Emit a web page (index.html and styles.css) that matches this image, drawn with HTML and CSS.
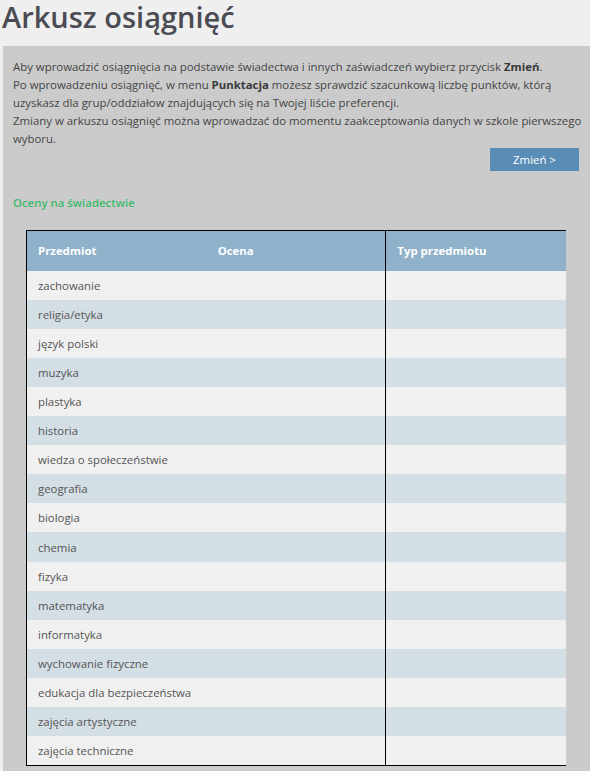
FILE: index.html
```html
<!DOCTYPE html>
<html lang="pl">
<head>
<meta charset="utf-8">
<title>Arkusz osiągnięć</title>
<link rel="stylesheet" href="styles.css">
</head>
<body>
<h1 class="title">Arkusz osiągnięć</h1>
<div class="panel">
  <p class="intro">Aby wprowadzić osiągnięcia na podstawie świadectwa i innych zaświadczeń wybierz przycisk <b>Zmień</b>.<br>
  Po wprowadzeniu osiągnięć, w menu <b>Punktacja</b> możesz sprawdzić szacunkową liczbę punktów, którą uzyskasz dla grup/oddziałow znajdujących się na Twojej liście preferencji.<br>
  Zmiany w arkuszu osiągnięć można wprowadzać do momentu zaakceptowania danych w szkole pierwszego wyboru.</p>
  <div class="actions"><button class="btn">Zmień &gt;</button></div>
  <h2 class="section">Oceny na świadectwie</h2>
  <table class="grades">
    <thead>
      <tr><th class="c1">Przedmiot</th><th class="c2">Ocena</th><th class="c3">Typ przedmiotu</th></tr>
    </thead>
    <tbody>
      <tr><td>zachowanie</td><td></td><td class="c3"></td></tr>
      <tr><td>religia/etyka</td><td></td><td class="c3"></td></tr>
      <tr><td>język polski</td><td></td><td class="c3"></td></tr>
      <tr><td>muzyka</td><td></td><td class="c3"></td></tr>
      <tr><td>plastyka</td><td></td><td class="c3"></td></tr>
      <tr><td>historia</td><td></td><td class="c3"></td></tr>
      <tr><td>wiedza o społeczeństwie</td><td></td><td class="c3"></td></tr>
      <tr><td>geografia</td><td></td><td class="c3"></td></tr>
      <tr><td>biologia</td><td></td><td class="c3"></td></tr>
      <tr><td>chemia</td><td></td><td class="c3"></td></tr>
      <tr><td>fizyka</td><td></td><td class="c3"></td></tr>
      <tr><td>matematyka</td><td></td><td class="c3"></td></tr>
      <tr><td>informatyka</td><td></td><td class="c3"></td></tr>
      <tr><td>wychowanie fizyczne</td><td></td><td class="c3"></td></tr>
      <tr><td>edukacja dla bezpieczeństwa</td><td></td><td class="c3"></td></tr>
      <tr><td>zajęcia artystyczne</td><td></td><td class="c3"></td></tr>
      <tr><td>zajęcia techniczne</td><td></td><td class="c3"></td></tr>
    </tbody>
  </table>
</div>
</body>
</html>
```
FILE: styles.css
```css
* { box-sizing: border-box; }
html, body { margin: 0; padding: 0; }
body {
  background: #efefef;
  font-family: "Open Sans", "Liberation Sans", sans-serif;
  color: #444;
  height: 771px;
  overflow: hidden;
}
.title {
  margin: 0;
  padding: 2px 0 0 2px;
  height: 46px;
  font-size: 29px;
  line-height: 30px;
  font-weight: 600;
  color: #4b4b53;
}
.panel {
  margin-left: 3px;
  background: #cbcbcb;
  padding: 12px 11px 10px 10px;
  min-height: 730px;
}
.intro {
  margin: 0 -6px 0 0;
  font-size: 11.4px;
  line-height: 18px;
  color: #444;
}
.intro b { font-weight: 700; color: #3a3a3a; }
.actions {
  display: flex;
  justify-content: flex-end;
}
.btn {
  width: 89px;
  height: 23px;
  border: 0;
  background: #5a8db5;
  color: #fff;
  font-family: inherit;
  font-size: 11.4px;
  padding: 0;
  margin-top: 0;
}
.section {
  margin: 24px 0 0 0;
  font-size: 11.4px;
  line-height: 16px;
  font-weight: 600;
  color: #3dba6c;
}
.grades {
  margin: 19px 0 0 13px;
  width: 540px;
  border-collapse: collapse;
  border-top: 1px solid #000;
  border-left: 1px solid #000;
  border-bottom: 1px solid #000;
  font-size: 11.4px;
  table-layout: fixed;
}
.grades th {
  background: #8fb1ca;
  color: #fff;
  font-weight: 700;
  text-align: left;
  height: 40px;
  padding: 0 11px;
}
.grades th.c1 { width: 180px; }
.grades th.c2 { width: 179px; }
.grades th.c3 { width: 180px; }
.grades .c3 { border-left: 1px solid #000; }
.grades td {
  height: 29.12px;
  padding: 0 11px;
  color: #555;
  white-space: nowrap;
}
.grades tbody tr:nth-child(odd) { background: #f0f0f0; }
.grades tbody tr:nth-child(even) { background: #d3dee5; }
```
